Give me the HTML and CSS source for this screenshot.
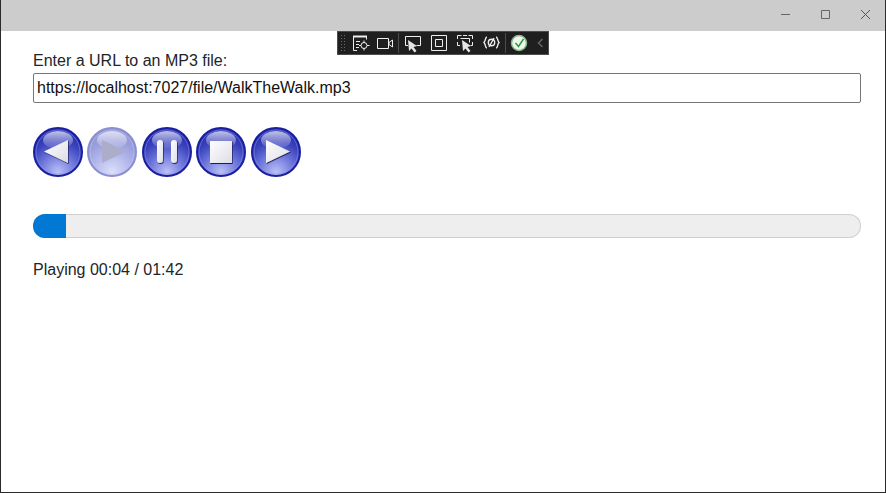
FILE: index.html
```html
<!DOCTYPE html>
<html>
<head>
    <meta charset="UTF-8">
    <title>MP3 Player</title>
    <link rel="stylesheet" href="styles.css">
</head>
<body>
    <div class="window">
        <header class="titlebar">
            <svg class="caption" width="116" height="30" viewBox="0 0 116 30">
                <path d="M11 14.500h9" stroke="#666" fill="none"/>
                <path d="M51.500 10.500h8v8h-8z" stroke="#666" fill="none"/>
                <path d="M91 10l9 9M100 10l-9 9" stroke="#555" fill="none"/>
            </svg>
        </header>

        <!-- debug toolbar, floats over the page -->
        <div class="devbar">
            <span class="grip"></span>
            <svg class="devicons" width="212" height="24" viewBox="0 0 212 24">
                <g fill="none" stroke="#eee">
                    <path d="M16.500 19.500v-14h13v3M20 19.500h-3.500M19 10.500h4M19 13.500h3M19 16.500h3"/>
                    <path d="M16 5.500h14" stroke-width="2"/>
                    <circle cx="27" cy="14.500" r="3"/>
                    <path d="M27 9.500v2.500M27 17v2.500M22 14.500h2M30 14.500h2.500"/>

                    <path d="M40.500 7.500h11v10h-11zM52 11.500l3.500-2.500v7l-3.500-2.500z"/>

                    <path d="M71 14.500h-2.500v-9h15v9h-4"/>

                    <path d="M94.500 4.500h15v15h-15zM98.500 8.500h7v7h-7z"/>

                    <path d="M120.500 8v-3.500h4M131.500 4.500h4v3.500M120.500 11v3.500h2.500M135.500 11v3.500h-2M126 4.500h4M123.500 7.500h9v4"/>

                    <g stroke-width="1.400">
                        <path d="M150 6c-2 0-1 3.500-3 5.500 2 2 1 5.500 3 5.500M159 6c2 0 1 3.500 3 5.500-2 2-1 5.500-3 5.500"/>
                        <circle cx="154.500" cy="11.500" r="3.200"/>
                        <path d="M152 16l5-9"/>
                    </g>
                </g>
                <path d="M71 9l9 6-3.500 1 3 4-2 1.500-3-4-2.500 2.500z" fill="#e6e6e6"/>
                <path d="M125 9l9 6-3.500 1 3 4-2 1.500-3-4-2.500 2.500z" fill="#e6e6e6"/>
                <path d="M61.500 2v20M168.500 2v20" stroke="#4d4d4d"/>
                <circle cx="182" cy="12" r="7.500" fill="#eef6ee" stroke="#86b886" stroke-width="1.500"/>
                <path d="M178.500 12l3 3.500 5-7.500" fill="none" stroke="#2e9b3e" stroke-width="1.500"/>
                <path d="M205.500 8l-4 4 4 4" fill="none" stroke="#666" stroke-width="1.500"/>
            </svg>
        </div>

        <main class="content">
            <label class="url-label" for="url">Enter a URL to an MP3 file:</label>
            <input class="url-input" id="url" type="text" value="https://localhost:7027/file/WalkTheWalk.mp3">

            <svg class="sprites" width="0" height="0">
                <defs>
                    <radialGradient id="ball" cx="50%" cy="92%" r="75%">
                        <stop offset="0" stop-color="#bcc1f6"/>
                        <stop offset="0.5" stop-color="#6c75da"/>
                        <stop offset="0.85" stop-color="#3a43bc"/>
                        <stop offset="1" stop-color="#2f38b4"/>
                    </radialGradient>
                    <linearGradient id="gloss" x1="0" y1="0" x2="0" y2="1">
                        <stop offset="0" stop-color="#fff" stop-opacity="0.7"/>
                        <stop offset="1" stop-color="#fff" stop-opacity="0.05"/>
                    </linearGradient>
                    <linearGradient id="glyph" x1="0" y1="0" x2="1" y2="1">
                        <stop offset="0" stop-color="#fff"/>
                        <stop offset="1" stop-color="#dcdce6"/>
                    </linearGradient>
                    <filter id="glyph-shadow" x="-30%" y="-30%" width="160%" height="160%">
                        <feDropShadow dx="0.6" dy="0.9" stdDeviation="0.6" flood-color="#07074a"/>
                    </filter>
                    <symbol id="orb" viewBox="0 0 50 50">
                        <circle cx="25" cy="25" r="24" fill="url(#ball)" stroke="#1a1fa0" stroke-width="2"/>
                        <circle cx="25" cy="25" r="22" fill="none" stroke="#8f96ea" stroke-opacity="0.5"/>
                        <ellipse cx="25" cy="13" rx="15" ry="9" fill="url(#gloss)"/>
                    </symbol>
                </defs>
            </svg>

            <div class="controls">
                <button class="orb-btn" title="Previous">
                    <svg width="50" height="50" viewBox="0 0 50 50">
                        <use href="#orb" width="50" height="50"/>
                        <path class="glyph" d="M11 24.500L35 13v23z"/>
                    </svg>
                </button>
                <button class="orb-btn is-disabled" title="Play">
                    <svg width="50" height="50" viewBox="0 0 50 50">
                        <use href="#orb" width="50" height="50"/>
                        <path class="glyph-off" d="M15 13l24 11.500L15 36z"/>
                    </svg>
                </button>
                <button class="orb-btn" title="Pause">
                    <svg width="50" height="50" viewBox="0 0 50 50">
                        <use href="#orb" width="50" height="50"/>
                        <rect class="glyph" x="15" y="13" width="6" height="23" rx="3"/>
                        <rect class="glyph" x="29" y="13" width="6" height="23" rx="3"/>
                    </svg>
                </button>
                <button class="orb-btn" title="Stop">
                    <svg width="50" height="50" viewBox="0 0 50 50">
                        <use href="#orb" width="50" height="50"/>
                        <rect class="glyph" x="14" y="14" width="22" height="22"/>
                    </svg>
                </button>
                <button class="orb-btn" title="Next">
                    <svg width="50" height="50" viewBox="0 0 50 50">
                        <use href="#orb" width="50" height="50"/>
                        <path class="glyph" d="M15 13l24 11.500L15 36z"/>
                    </svg>
                </button>
            </div>

            <div class="progress">
                <div class="progress-bar" style="width: 4%"></div>
            </div>

            <p class="status">Playing 00:04 / 01:42</p>
        </main>
    </div>
</body>
</html>
```

FILE: styles.css
```css
html, body {
    margin: 0;
    height: 100%;
}

body {
    font-family: "Liberation Sans", Arial, sans-serif;
    font-size: 16px;
    color: #212529;
    background: #fff;
}

.window {
    position: relative;
    box-sizing: border-box;
    height: 493px;
    border: 1px solid #2b2b2b;
    border-top: 0;
    overflow: hidden;
}

.titlebar {
    display: flex;
    justify-content: flex-end;
    height: 31px;
    background-color: #cccccc;
}

.caption {
    display: block;
    margin-right: -1px;
}

.devbar {
    position: absolute;
    top: 31px;
    left: 336px;
    width: 212px;
    height: 24px;
    background-color: #1f1f1f;
    box-shadow: inset 0 0 0 1px #4d4d4d;
}

.grip {
    position: absolute;
    left: 3px;
    top: 3px;
    width: 6px;
    height: 18px;
    background-image: radial-gradient(#6a6a6a 0.8px, transparent 1px);
    background-size: 3px 3px;
}

.devicons {
    display: block;
}

.content {
    padding: 20px 24px 0 32px;
}

.url-label {
    display: block;
    height: 22px;
    line-height: 20px;
}

.url-input {
    display: block;
    box-sizing: border-box;
    width: 828px;
    height: 30px;
    padding: 1px 3px;
    border: 1px solid #767676;
    border-radius: 2px;
    font-family: inherit;
    font-size: 16px;
    color: #111;
}

.sprites {
    position: absolute;
}

.controls {
    display: flex;
    gap: 4.400px;
    margin-top: 24px;
}

.orb-btn {
    width: 50px;
    height: 50px;
    padding: 0;
    border: 0;
    background: none;
    cursor: pointer;
}

.orb-btn svg {
    display: block;
}

.glyph {
    fill: url(#glyph);
    filter: url(#glyph-shadow);
}

.glyph-off {
    fill: #5c5c98;
}

.is-disabled {
    opacity: 0.5;
}

.progress {
    box-sizing: border-box;
    width: 828px;
    height: 24px;
    margin-top: 37px;
    border-radius: 12px;
    background-color: #eeeeee;
    box-shadow: inset 0 0 0 1px #cfcfcf;
    overflow: hidden;
}

.progress-bar {
    height: 100%;
    background-color: #0078d4;
}

.status {
    margin: 22px 0 0;
    line-height: 19px;
}
```
